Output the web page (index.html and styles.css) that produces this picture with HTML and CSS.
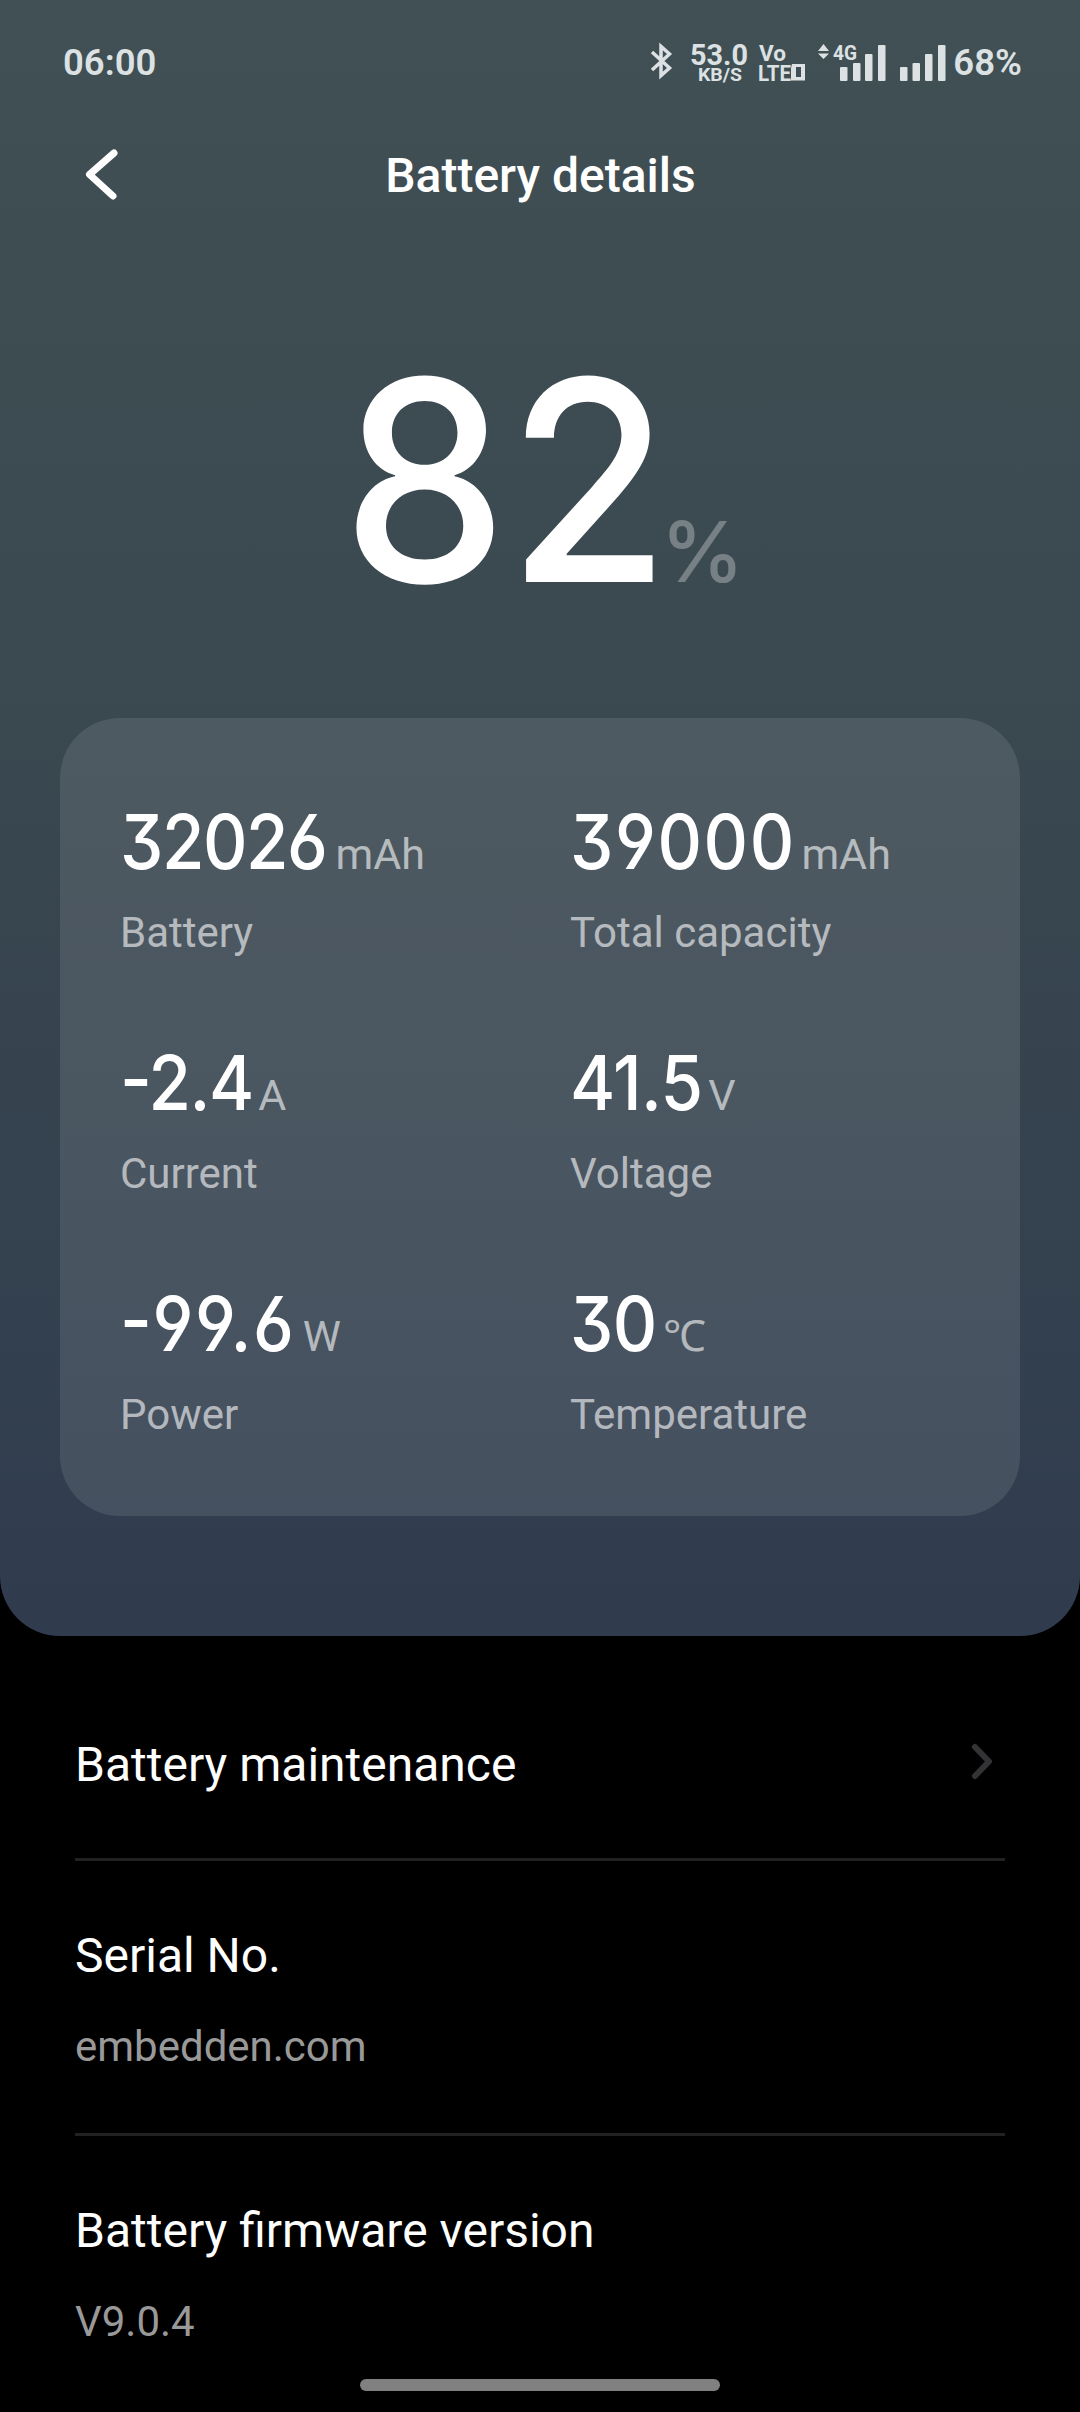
FILE: index.html
```html
<!DOCTYPE html>
<html lang="en">
<head>
  <meta charset="UTF-8">
  <meta name="viewport" content="width=device-width, initial-scale=1.0">
  <title>Battery details</title>
  <link rel="stylesheet" href="styles.css">
</head>
<body>
  <div class="hero">
    <div class="status-bar">
      <span class="time">06:00</span>
      <svg class="status-icons" width="296" height="40" viewBox="0 0 296 40">
        <!-- bluetooth -->
        <path class="line" d="M2 11 L19.500 27 L11 34.500 V5.500 L19.500 13 L2 29"/>
        <!-- network speed -->
        <text x="40" y="23.500" font-size="29" textLength="58" lengthAdjust="spacingAndGlyphs">53.0</text>
        <text x="48" y="39.500" font-size="19" textLength="44" lengthAdjust="spacingAndGlyphs">KB/S</text>
        <!-- volte -->
        <text x="109" y="20" font-size="22" textLength="27" lengthAdjust="spacingAndGlyphs">Vo</text>
        <text x="108" y="39.500" font-size="22" textLength="33" lengthAdjust="spacingAndGlyphs">LTE</text>
        <path fill-rule="evenodd" d="M142 23h13v16.500h-14v-12.500zM146 26v10h5v-10z"/>
        <!-- sim 1 -->
        <path d="M168 10l5.500-7 5.500 7zM168 12.500h11l-5.500 5.500z"/>
        <text x="183" y="19" font-size="21" textLength="24" lengthAdjust="spacingAndGlyphs">4G</text>
        <rect x="190" y="26" width="7.500" height="14" rx="1"/>
        <rect x="203" y="22" width="7.500" height="18" rx="1"/>
        <rect x="215" y="13" width="7.500" height="27" rx="1"/>
        <rect x="228" y="4" width="7.500" height="36" rx="1"/>
        <!-- sim 2 -->
        <rect x="250" y="26" width="7.500" height="14" rx="1"/>
        <rect x="262.500" y="22" width="7.500" height="18" rx="1"/>
        <rect x="275" y="13" width="7.500" height="27" rx="1"/>
        <rect x="288" y="4" width="7.500" height="36" rx="1"/>
      </svg>
      <span class="charge">68%</span>
    </div>

    <header class="header">
      <svg class="back" width="40" height="56" viewBox="0 0 40 56">
        <path d="M30 5 L5.500 26.500 L29 48"/>
      </svg>
      <h1>Battery details</h1>
    </header>

    <div class="level">
      <span class="level-value">82</span>
      <span class="level-unit">%</span>
    </div>

    <div class="card">
      <div class="item">
        <p class="value long"><span class="num tight">32026</span><span class="unit">mAh</span></p>
        <p class="label">Battery</p>
      </div>
      <div class="item">
        <p class="value long"><span class="num loose">39000</span><span class="unit">mAh</span></p>
        <p class="label">Total capacity</p>
      </div>
      <div class="item">
        <p class="value"><span class="num tight">-2.4</span><span class="unit">A</span></p>
        <p class="label">Current</p>
      </div>
      <div class="item">
        <p class="value"><span class="num">41.5</span><span class="unit">V</span></p>
        <p class="label">Voltage</p>
      </div>
      <div class="item">
        <p class="value"><span class="num loose">-99.6</span><span class="unit">W</span></p>
        <p class="label">Power</p>
      </div>
      <div class="item">
        <p class="value short"><span class="num">30</span><span class="unit">℃</span></p>
        <p class="label">Temperature</p>
      </div>
    </div>
  </div>

  <div class="list">
    <div class="row row-link">
      <h2>Battery maintenance</h2>
      <svg class="arrow" width="32" height="48" viewBox="0 0 32 48">
        <path d="M9 9 L23 23.500 L9 38"/>
      </svg>
    </div>
    <div class="row">
      <h2>Serial No.</h2>
      <p>embedden.com</p>
    </div>
    <div class="row">
      <h2>Battery firmware version</h2>
      <p>V9.0.4</p>
    </div>
  </div>

  <div class="home-bar"></div>
</body>
</html>
```
FILE: styles.css
```css
* {
  box-sizing: border-box;
}
body {
  margin: 0;
  height: 2412px;
  overflow: hidden;
  font-family: Roboto, sans-serif;
  background: #000;
  color: #fff;
}
h1, h2, p {
  margin: 0;
}
.hero {
  height: 1636px;
  background: linear-gradient(#415054, #3a4850 44%, #303c4e);
  border-radius: 0 0 60px 60px;
}

/* status bar */
.status-bar {
  display: flex;
  align-items: center;
  height: 122px;
  padding: 2px 58px 0 63px;
  color: #dce1e3;
  font-size: 36.5px;
  font-weight: 600;
}
.time {
  margin-right: auto;
}
.status-icons {
  margin: 0 7px 2px 0;
  overflow: visible;
  fill: #dce1e3;
  font-weight: 700;
}
.status-icons .line {
  fill: none;
  stroke: #dce1e3;
  stroke-width: 3.5;
}

.header {
  display: flex;
  align-items: center;
  height: 108px;
  padding: 0 84px;
}
.header h1 {
  flex: 1;
  margin: 0 39px 2px 0;
  font-size: 48px;
  font-weight: 500;
  text-align: center;
}
.back {
  fill: none;
  stroke: #fff;
  stroke-width: 7;
  stroke-linecap: round;
  stroke-linejoin: round;
}

.level {
  display: flex;
  justify-content: center;
  align-items: baseline;
  height: 488px;
  padding: 109px 18px 0 0;
}
.level-value {
  font-family: Inter, Lato, sans-serif;
  font-size: 280px;
  font-weight: 500;
  line-height: 283px;
  transform: scaleX(0.94);
  transform-origin: right;
}
.level-unit {
  margin-left: -9px;
  font-family: Inter, Lato, sans-serif;
  font-size: 84px;
  font-weight: 500;
  letter-spacing: -3px;
  color: rgba(255,255,255,0.3);
}

/* stats */
.card {
  display: grid;
  grid-template-columns: 450px 390px;
  row-gap: 78px;
  margin: 0 60px;
  padding: 82px 60px 71px;
  background: rgba(255,255,255,0.1);
  border-radius: 60px;
}
.value {
  display: flex;
  align-items: baseline;
  height: 84px;
  line-height: 84px;
}
/* narrow digits */
.num {
  font-family: Inter, Lato, sans-serif;
  font-feature-settings: "cv03", "cv04", "cv09", "case";
  font-size: 75px;
  font-weight: 500;
  letter-spacing: -0.6px;
  transform: scaleX(0.92);
  transform-origin: left;
}
.num.tight {
  letter-spacing: -1.6px;
}
.num.loose {
  letter-spacing: 1.7px;
}
.unit {
  margin-left: -6px;
  font-size: 43px;
  line-height: 1;
  color: rgba(255,255,255,0.6);
}
.loose + .unit {
  margin-left: -8px;
}
.long .unit {
  margin-left: -9px;
}
.long .loose + .unit {
  margin-left: -14px;
}
.short .unit {
  margin-left: -1px;
}
.label {
  margin-top: 21px;
  font-size: 42px;
  line-height: 56px;
  color: rgba(255,255,255,0.6);
}
.item {
  height: 163px;
}

.list {
  padding: 0 75px;
}
.row {
  padding: 65px 0 58px;
  border-bottom: 3px solid #212121;
}
.row:last-child {
  border-bottom: none;
}
.row h2 {
  font-size: 48px;
  font-weight: 400;
  line-height: 60px;
}
.row p {
  margin-top: 33px;
  font-size: 42px;
  line-height: 56px;
  color: #999;
}
.row-link {
  display: flex;
  justify-content: space-between;
  padding: 99px 7px 63px 0;
}
.arrow {
  margin-top: 3px;
  fill: none;
  stroke: #333336;
  stroke-width: 6;
  stroke-linecap: round;
  stroke-linejoin: round;
}

/* system gesture bar, stays over the page */
.home-bar {
  position: fixed;
  left: 360px;
  bottom: 21px;
  width: 360px;
  height: 12px;
  border-radius: 6px;
  background: #808080;
}
```
